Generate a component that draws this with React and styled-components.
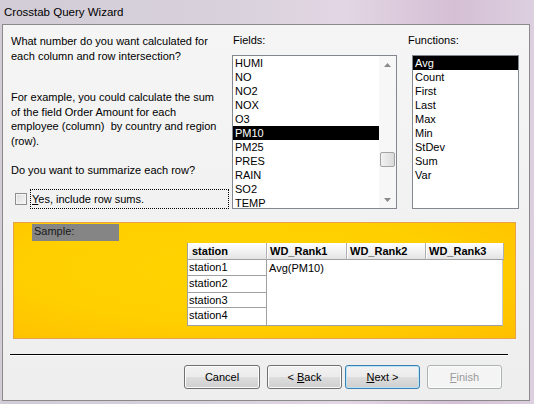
import React from "react";
import styled, { createGlobalStyle } from "styled-components";

const GlobalStyle = createGlobalStyle`
  html, body {
    margin: 0;
    padding: 0;
  }
  body {
    width: 534px;
    height: 404px;
    overflow: hidden;
    font-family: "Liberation Sans", Arial, sans-serif;
    font-size: 11px;
    color: #000;
  }
`;

const Window = styled.div`
  width: 534px;
  height: 404px;
  display: flex;
  flex-direction: column;
  background: linear-gradient(
    90deg,
    #d2ccd6 0%,
    #d9d2dc 45%,
    #e2d6e3 65%,
    #d5bfd5 85%,
    #dccfdf 100%
  );
`;

const TitleBar = styled.div`
  height: 24px;
  line-height: 24px;
  padding-left: 4px;
  font-size: 11.5px;
  color: #000;
`;

const Client = styled.div`
  flex: 1;
  margin: 0 4px 3px 2px;
  border: 1px solid #8a8a8a;
  background: linear-gradient(#f5f5f5, #eeeeee);
  display: flex;
  flex-direction: column;
`;

const Top = styled.div`
  display: grid;
  grid-template-columns: 221px 180px 107px;
  padding: 8px 0 0 8px;
  align-items: start;
`;

const Left = styled.div`
  display: flex;
  flex-direction: column;
`;

const Para = styled.p`
  margin: ${(p) => p.$top}px 0 0 0;
  line-height: 14.5px;
`;

const CheckRow = styled.div`
  margin-top: 11px;
  display: flex;
  align-items: center;
`;

const CheckBox = styled.span`
  width: 12px;
  height: 12px;
  box-sizing: border-box;
  margin-left: 4px;
  border: 1px solid #8e8f8f;
  background: linear-gradient(135deg, #dcdcdc, #f6f6f6);
  box-shadow: inset 0 0 0 1px #f4f4f4;
`;

const CheckLabel = styled.span`
  margin-left: 3px;
  width: 199px;
  height: 20px;
  box-sizing: border-box;
  border: 1px dotted #000;
  padding-left: 1px;
  line-height: 18px;
`;

const Col = styled.div`
  display: flex;
  flex-direction: column;
`;

const Label = styled.div`
  line-height: 14px;
  margin-left: ${(p) => p.$shift || 0}px;
`;

const ListBox = styled.div`
  margin-top: 8px;
  width: ${(p) => p.$w}px;
  height: 154px;
  box-sizing: border-box;
  border: 1px solid #828790;
  background: #fff;
  display: flex;
  overflow: hidden;
`;

const Items = styled.div`
  flex: 1;
  display: flex;
  flex-direction: column;
`;

const Item = styled.div`
  height: 14px;
  line-height: 14px;
  flex-shrink: 0;
  padding-left: 2px;
  background: ${(p) => (p.$sel ? "#000" : "transparent")};
  color: ${(p) => (p.$sel ? "#fff" : "#000")};
`;

const ScrollBar = styled.div`
  width: 17px;
  display: flex;
  flex-direction: column;
  background: #f7f7f7;
`;

const Arrow = styled.div`
  height: 17px;
  display: flex;
  align-items: center;
  justify-content: center;
`;

const Track = styled.div`
  flex: 1;
  display: flex;
  flex-direction: column;
`;

const Thumb = styled.div`
  margin: 79px auto 0;
  width: 15px;
  height: 15px;
  box-sizing: border-box;
  border: 1px solid #a3a3a3;
  border-radius: 2px;
  background: linear-gradient(90deg, #f2f2f2, #dadada);
`;

const Panel = styled.div`
  margin: 13px 0 0 10px;
  width: 503px;
  height: 117px;
  box-sizing: border-box;
  border: 1px solid #e9a24a;
  background: radial-gradient(
    ellipse at 45% 40%,
    #ffd400 0%,
    #ffcf00 55%,
    #ffbf00 100%
  );
  padding: 1px 0 0 18px;
`;

const SampleTag = styled.div`
  width: 87px;
  height: 17px;
  line-height: 15px;
  background: #858585;
  color: #1a1a1a;
  padding-left: 2px;
  box-sizing: border-box;
`;

const Grid = styled.div`
  margin: 2px 0 0 155px;
  display: grid;
  grid-template-columns: 79px 80px 79px 78px;
  grid-template-rows: 17px 16px 17px 15px 17px;
  width: 316px;
  box-sizing: border-box;
  border-left: 1px solid #a0a0a0;
  border-bottom: 1px solid #a0a0a0;
  border-right: 1px solid #c8c8c8;
  background: #fff;
`;

const Head = styled.div`
  font-weight: bold;
  line-height: 16px;
  padding-left: ${(p) => (p.$first ? 4 : 3)}px;
  background: linear-gradient(#ffffff 0%, #f3f3f3 50%, #e3e3e3 100%);
  border-bottom: 1px solid #a0a0a0;
  border-right: 1px solid #b0b0b0;
  box-shadow: inset 1px 0 0 #fff;
`;

const RowHead = styled.div`
  grid-column: 1;
  line-height: 15px;
  padding-left: 1px;
  border-right: 1px solid #a0a0a0;
  border-bottom: ${(p) => (p.$last ? "none" : "1px solid #a0a0a0")};
  background: #fff;
`;

const Data = styled.div`
  grid-column: 2 / 5;
  grid-row: 2 / 6;
  padding: 1px 0 0 2px;
  line-height: 14px;
`;

const Rule = styled.div`
  margin: 15px 0 0 7px;
  width: 498px;
  border-top: 1px solid #000;
  border-bottom: 1px solid #fff;
`;

const Buttons = styled.div`
  margin: 9px 0 0 181px;
  display: flex;
`;

const Button = styled.button`
  margin-left: ${(p) => p.$gap || 0}px;
  width: ${(p) => p.$w || 75}px;
  height: 24px;
  padding: 0;
  font-family: inherit;
  font-size: 11px;
  border-radius: 3px;
  border: 1px solid ${(p) => (p.$focus ? "#3c7fb1" : p.disabled ? "#adb2b5" : "#707070")};
  color: ${(p) => (p.disabled ? "#9a9a9a" : "#000")};
  background: ${(p) =>
    p.disabled
      ? "#f4f4f4"
      : "linear-gradient(#f2f2f2 0%, #ebebeb 50%, #dddddd 51%, #cfcfcf 100%)"};
  box-shadow: inset 0 0 0 1px ${(p) => (p.$focus ? "#b8e4fa" : "#fcfcfc")};
  u {
    text-decoration: underline;
  }
`;

const fields = ["HUMI", "NO", "NO2", "NOX", "O3", "PM10", "PM25", "PRES", "RAIN", "SO2", "TEMP"];
const functions = ["Avg", "Count", "First", "Last", "Max", "Min", "StDev", "Sum", "Var"];
const stations = ["station1", "station2", "station3", "station4"];

const UpArrow = () => (
  <svg width="7" height="4" viewBox="0 0 7 4">
    <path d="M0 4 L3.5 0 L7 4 Z" fill="#8a8a8a" />
  </svg>
);

const DownArrow = () => (
  <svg width="7" height="4" viewBox="0 0 7 4">
    <path d="M0 0 L3.5 4 L7 0 Z" fill="#8a8a8a" />
  </svg>
);

export default function App() {
  return (
    <Window>
      <GlobalStyle />
      <TitleBar>Crosstab Query Wizard</TitleBar>
      <Client>
        <Top>
          <Left>
            <Para $top={1}>
              What number do you want calculated for
              <br />
              each column and row intersection?
            </Para>
            <Para $top={27}>
              For example, you could calculate the sum
              <br />
              of the field Order Amount for each
              <br />
              employee (column)&nbsp; by country and region
              <br />
              (row).
            </Para>
            <Para $top={15}>Do you want to summarize each row?</Para>
            <CheckRow>
              <CheckBox />
              <CheckLabel>
                <u>Y</u>es, include row sums.
              </CheckLabel>
            </CheckRow>
          </Left>
          <Col>
            <Label $shift={1}>Fields:</Label>
            <ListBox $w={165}>
              <Items>
                {fields.map((f) => (
                  <Item key={f} $sel={f === "PM10"}>
                    {f}
                  </Item>
                ))}
              </Items>
              <ScrollBar>
                <Arrow>
                  <UpArrow />
                </Arrow>
                <Track>
                  <Thumb />
                </Track>
                <Arrow>
                  <DownArrow />
                </Arrow>
              </ScrollBar>
            </ListBox>
          </Col>
          <Col>
            <Label $shift={-4}>Functions:</Label>
            <ListBox $w={107}>
              <Items>
                {functions.map((f) => (
                  <Item key={f} $sel={f === "Avg"}>
                    {f}
                  </Item>
                ))}
              </Items>
            </ListBox>
          </Col>
        </Top>
        <Panel>
          <SampleTag>Sample:</SampleTag>
          <Grid>
            <Head $first>station</Head>
            <Head>WD_Rank1</Head>
            <Head>WD_Rank2</Head>
            <Head>WD_Rank3</Head>
            {stations.map((s, i) => (
              <RowHead key={s} $last={i === stations.length - 1}>
                {s}
              </RowHead>
            ))}
            <Data>Avg(PM10)</Data>
          </Grid>
        </Panel>
        <Rule />
        <Buttons>
          <Button $w={76}>Cancel</Button>
          <Button $gap={7}>
            &lt; <u>B</u>ack
          </Button>
          <Button $gap={3} $focus>
            <u>N</u>ext &gt;
          </Button>
          <Button $gap={7} disabled>
            <u>F</u>inish
          </Button>
        </Buttons>
      </Client>
    </Window>
  );
}
